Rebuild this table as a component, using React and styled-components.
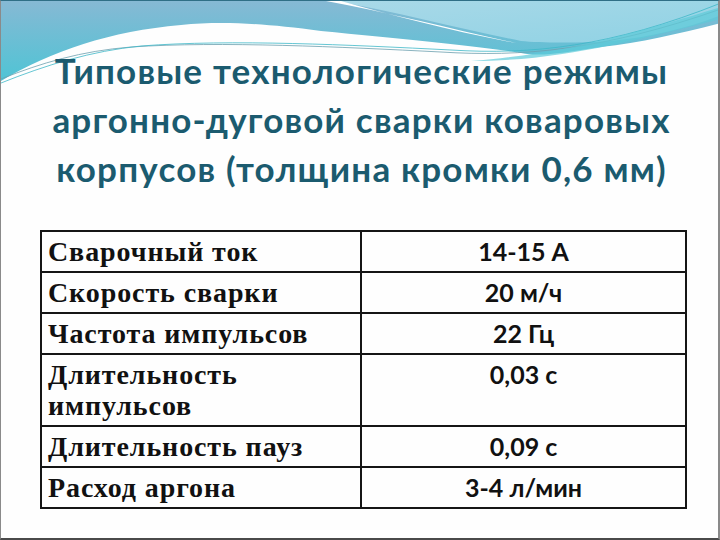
import React from 'react';
import styled, { createGlobalStyle } from 'styled-components';

const GlobalStyle = createGlobalStyle`
  html, body {
    margin: 0;
    padding: 0;
    background: #fff;
  }
`;

const Slide = styled.div`
  position: relative;
  box-sizing: border-box;
  width: 720px;
  height: 540px;
  overflow: hidden;
  background: #fefefe;
  border-top: 1px solid #2f6f86;
  border-left: 1px solid #8a8a8a;
  border-right: 2px solid #8a8a8a;
  border-bottom: 2px solid #4a4a4a;
`;

const Decor = styled.svg`
  position: absolute;
  top: 0;
  left: 0;
  z-index: 0;
`;

const Content = styled.div`
  position: relative;
  z-index: 1;
  display: flex;
  flex-direction: column;
  align-items: center;
  padding-top: 45px;
`;

const Title = styled.h1`
  margin: 0 0 0 4px;
  font-family: Lato, "Open Sans", sans-serif;
  font-weight: 700;
  font-size: 35px;
  letter-spacing: 1.2px;
  line-height: 49px;
  color: #1b5b6f;
  text-align: center;
`;

const Table = styled.table`
  align-self: flex-start;
  margin: 37px 0 0 39px;
  width: 647px;
  border-collapse: collapse;
`;

const Cell = styled.td`
  border: 2px solid #151515;
  padding: 4px 6px;
  vertical-align: top;
  line-height: 31px;
  color: #111;
  ${({ $value }) =>
    $value
      ? `
    width: 322px;
    text-align: center;
    font-family: Lato, "Open Sans", sans-serif;
    font-weight: 700;
    font-size: 25px;
  `
      : `
    width: 311px;
    text-align: left;
    font-family: "Liberation Serif", "DejaVu Serif", serif;
    font-weight: 700;
    font-size: 28px;
    letter-spacing: 0.9px;
  `}
`;

const rows = [
  ['Сварочный ток', '14-15 А'],
  ['Скорость сварки', '20 м/ч'],
  ['Частота импульсов', '22 Гц'],
  ['Длительность импульсов', '0,03 с'],
  ['Длительность пауз', '0,09 с'],
  ['Расход аргона', '3-4 л/мин'],
];

const Waves = () => (
  <Decor width="720" height="130" viewBox="0 0 720 130">
    <defs>
      <linearGradient id="sky" x1="0" y1="0" x2="0" y2="1">
        <stop offset="0" stopColor="#86b9d4" />
        <stop offset="1" stopColor="#4fc4d5" />
      </linearGradient>
      <linearGradient id="skyR" x1="0" y1="0" x2="1" y2="1">
        <stop offset="0" stopColor="#a9d9e8" />
        <stop offset="1" stopColor="#8fd2e4" />
      </linearGradient>
    </defs>
    <path
      d="M0 0 H720 V22 C680 32 640 42 600 46 C560 52 540 56 520 52 C470 44 400 38 320 30 C260 22 220 20 180 24 C110 30 50 50 0 80 Z"
      fill="url(#sky)"
    />
    <path
      d="M335 0 H720 V14 C690 26 650 36 610 40 C580 42 540 42 520 40 C460 28 400 12 335 0 Z"
      fill="url(#skyR)"
    />
    <path
      d="M325 0 C390 12 450 28 515 42 C450 30 390 14 340 0 Z"
      fill="#ffffff"
    />
    <path
      d="M0 78 C40 62 80 50 130 46 C220 40 340 46 440 51 C520 56 600 50 720 8"
      fill="none"
      stroke="#6c9fae"
      strokeWidth="0.8"
    />
    <path
      d="M0 82 C45 64 90 50 140 45 C230 38 350 44 450 49 C530 54 610 46 720 2"
      fill="none"
      stroke="#3db8c8"
      strokeWidth="0.8"
    />
    <path
      d="M470 60 C560 60 630 40 720 18 V6 C640 30 570 52 470 60 Z"
      fill="#5ccbd9"
      opacity="0.7"
    />
  </Decor>
);

export default function App() {
  return (
    <>
      <GlobalStyle />
      <Slide>
        <Waves />
        <Content>
          <Title>
            Типовые технологические режимы
            <br />
            аргонно-дуговой сварки коваровых
            <br />
            корпусов (толщина кромки 0,6 мм)
          </Title>
          <Table>
            <tbody>
              {rows.map(([name, value]) => (
                <tr key={name}>
                  <Cell>{name}</Cell>
                  <Cell $value>{value}</Cell>
                </tr>
              ))}
            </tbody>
          </Table>
        </Content>
      </Slide>
    </>
  );
}
